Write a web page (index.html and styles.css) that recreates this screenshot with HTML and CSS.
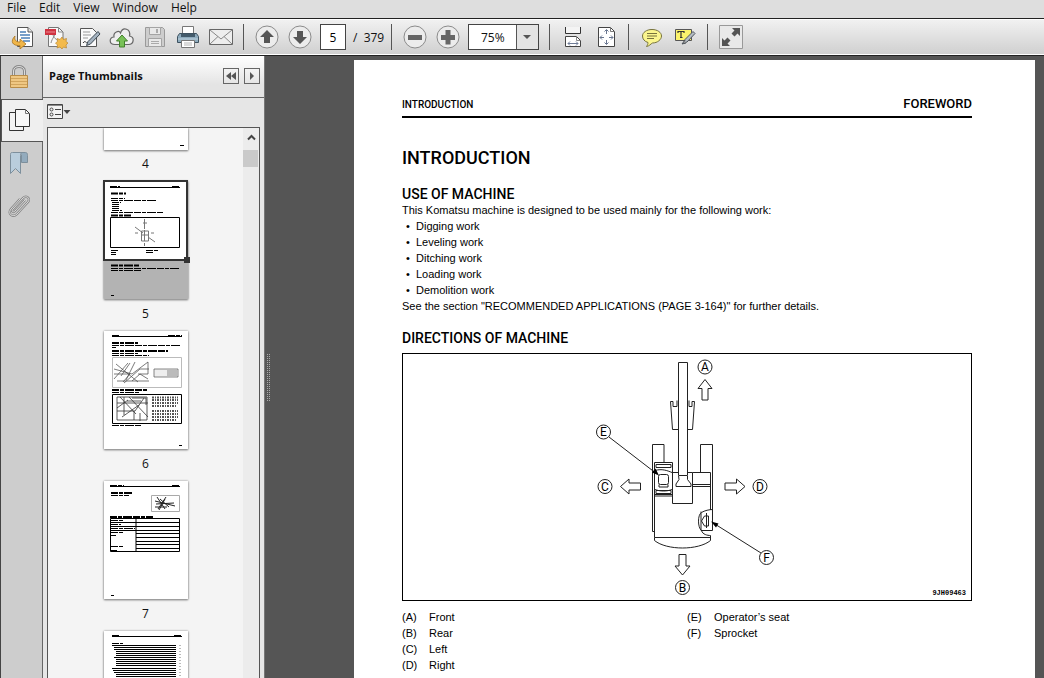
FILE: index.html
```html
<!DOCTYPE html>
<html lang="en">
<head>
    <meta charset="UTF-8">
    <meta name="viewport" content="width=device-width, initial-scale=1.0">
    <title>Shop Manual</title>
    <link rel="stylesheet" href="styles.css">
</head>
<body>
    <nav class="menubar">
        <a href="#">File</a>
        <a href="#">Edit</a>
        <a href="#">View</a>
        <a href="#">Window</a>
        <a href="#">Help</a>
    </nav>

    <div class="toolbar">
        <button class="tool" aria-label="Open">
            <svg width="24" height="24" viewBox="0 0 24 24">
                <path d="M6.500 2.500h10.500l4.500 4.500v14.500h-15z" fill="#fff" stroke="#555"/>
                <path d="M17 2.500v4.500h4.500" fill="#e4e4e4" stroke="#555"/>
                <path d="M9 7h6M9 10h10M10 13h9M12 16h7" stroke="#4b80b8" stroke-width="1.300"/>
                <path d="M4 11c-5 5-3 10 5 9.500V24l6-5-6-5v3c-4 0-6-2-5-6z" fill="#f0b64a" stroke="#a87420" stroke-width=".8"/>
            </svg>
        </button>
        <button class="tool" aria-label="Create PDF">
            <svg width="24" height="24" viewBox="0 0 24 24">
                <path d="M4.500 2.500h10l4.500 4.500v14.500H4.500z" fill="#f8f8f8" stroke="#777"/>
                <path d="M14.500 2.500V7H19M7 18c1-5 5-8 3-9s-1 6 7 7" fill="none" stroke="#888"/>
                <rect x="1" y="4" width="11" height="6" fill="#cf3341"/>
                <path d="M2 7h9" stroke="#ec8a92" stroke-width="1"/>
                <path d="M18 12l1.500 2.500 3-1-.5 3 2 1.500-2 2 .5 3-3-1L18 24l-2-2-3 1 .5-3-2-2 2-1.500-.5-3 3 1z" fill="#f3ba4c" stroke="#b98630" stroke-width=".7"/>
            </svg>
        </button>
        <button class="tool" aria-label="Sign">
            <svg width="24" height="24" viewBox="0 0 24 24">
                <path d="M3.500 3.500h12l4 4v14h-16z" fill="#fafafa" stroke="#555"/>
                <path d="M6 7h7M6 10h8M6 13h5" stroke="#999"/>
                <path d="M6 18c3-4 3 2 5-1" fill="none" stroke="#333"/>
                <path d="M21 6.500l2 2.500-9.500 10-4 1.500 1.500-4z" fill="#a5b3c0" stroke="#3e4a54"/>
            </svg>
        </button>
        <button class="tool" aria-label="Upload">
            <svg width="26" height="24" viewBox="0 0 26 24">
                <path d="M6 19.500C-.5 19.500 0 12 5 12 4 7 10 5 11.500 8 14 1 22 4 20.500 11c5.500 1 4.500 8.500-1 8.500z" fill="#eee" stroke="#666" stroke-width="1.200"/>
                <path d="M13 10l5.500 6h-3v6h-5v-6h-3z" fill="#78c157" stroke="#42812d"/>
            </svg>
        </button>
        <button class="tool" aria-label="Save" disabled>
            <svg width="24" height="24" viewBox="0 0 24 24">
                <path d="M2.500 2.500h17l2 2v17h-19z" fill="#cdcdcd" stroke="#9a9a9a"/>
                <path d="M6.500 2.500h11v7h-11zM5.500 13.500h13v8h-13z" fill="#e9e9e9" stroke="#a4a4a4"/>
                <path d="M13 4h2v4h-2zM8 16h8v1H8zM8 18h8v1H8z" fill="#aaa"/>
            </svg>
        </button>
        <button class="tool" aria-label="Print">
            <svg width="24" height="24" viewBox="0 0 24 24">
                <path d="M6.500 1.500h11v9h-11z" fill="#fff" stroke="#777"/>
                <path d="M3.500 8.500h17l2 3v6h-21v-6z" fill="#8eabbd" stroke="#3e5260"/>
                <path d="M5 9h14v3H5z" fill="#435b6b"/>
                <path d="M2 14h20" stroke="#c1d3df"/>
                <path d="M5.500 15.500h13v7h-13z" fill="#fff" stroke="#777"/>
                <path d="M8 18h8M8 20h8" stroke="#b5b5b5"/>
            </svg>
        </button>
        <button class="tool" aria-label="Email">
            <svg width="24" height="24" viewBox="0 0 24 24">
                <path d="M.5 4.500h23v15H.5z" fill="#eee" stroke="#666"/>
                <path d="M1 5l11 9L23 5M1 19l8-7.500M23 19l-8-7.500" fill="none" stroke="#888"/>
            </svg>
        </button>
        <span class="separator"></span>
        <button class="tool" aria-label="Previous page">
            <svg width="24" height="24" viewBox="0 0 24 24">
                <circle cx="12" cy="12" r="11" fill="#ececec" stroke="#8b8b8b"/>
                <path d="M12 5l7 7h-4v6H9v-6H5z" fill="#555"/>
            </svg>
        </button>
        <button class="tool" aria-label="Next page">
            <svg width="24" height="24" viewBox="0 0 24 24">
                <circle cx="12" cy="12" r="11" fill="#ececec" stroke="#8b8b8b"/>
                <path d="M12 19l7-7h-4V6H9v6H5z" fill="#555"/>
            </svg>
        </button>
        <input class="page-number" type="text" value="5" aria-label="Page number">
        <span class="page-total">/&nbsp; 379</span>
        <span class="separator"></span>
        <button class="tool" aria-label="Zoom out">
            <svg width="24" height="24" viewBox="0 0 24 24">
                <circle cx="12" cy="12" r="11" fill="#ececec" stroke="#8b8b8b"/>
                <path d="M5 10h14v5H5z" fill="#666"/>
            </svg>
        </button>
        <button class="tool" aria-label="Zoom in">
            <svg width="24" height="24" viewBox="0 0 24 24">
                <circle cx="12" cy="12" r="11" fill="#ececec" stroke="#8b8b8b"/>
                <path d="M5 10h4.500V5h5v5H19v5h-4.500v4.500h-5V15H5z" fill="#666"/>
            </svg>
        </button>
        <div class="zoom">
            <select aria-label="Zoom level">
                <option>50%</option>
                <option selected>75%</option>
                <option>100%</option>
            </select>
            <span class="zoom-arrow"></span>
        </div>
        <span class="separator"></span>
        <button class="tool" aria-label="Fit width">
            <svg width="24" height="24" viewBox="0 0 24 24">
                <path d="M4.500 2v6.500h15V2" fill="#f4f4f4" stroke="#333"/>
                <path d="M4.500 21.500v-10h11l4 4v6z" fill="#fff" stroke="#444"/>
                <path d="M15.500 11.500v4h4" fill="none" stroke="#888"/>
                <path d="M7 18.500h10M9 16.500l-2 2 2 2M15 16.500l2 2-2 2" fill="none" stroke="#6f7c96"/>
            </svg>
        </button>
        <button class="tool" aria-label="Fit page">
            <svg width="24" height="24" viewBox="0 0 24 24">
                <path d="M4.500 2.500h12l4 4v15h-16z" fill="#fff" stroke="#444"/>
                <path d="M16.500 2.500v4h4" fill="none" stroke="#777"/>
                <path d="M12.500 5v4M12.500 19v-4M6 12.500h4M19 12.500h-4M10.500 6.500l2-2 2 2M10.500 17.500l2 2 2-2M8 10.500l-2 2 2 2M17 10.500l2 2-2 2" fill="none" stroke="#68758f"/>
            </svg>
        </button>
        <span class="separator"></span>
        <button class="tool" aria-label="Comment">
            <svg width="24" height="24" viewBox="0 0 24 24">
                <path d="M12 4.500c5.500 0 9.500 3 9.500 6.500s-4 7-9 7c-2 1-3 3-6 3.500 1-1.500 1.500-2.500 1.500-4-3.500-1-5.500-3.500-5.500-6.500 0-3.500 4-6.500 9.500-6.500z" fill="#fbf68e" stroke="#77733d"/>
                <path d="M7 8.500h10M7 11h10M7 13.500h7" stroke="#77733d"/>
            </svg>
        </button>
        <button class="tool" aria-label="Highlight text">
            <svg width="24" height="24" viewBox="0 0 24 24">
                <path d="M2.500 4.500h16v11h-16z" fill="#fbf36c" stroke="#555"/>
                <path d="M5 8V6.500h6V8M8 6.500V12M7 12.500h2.500" fill="none" stroke="#333" stroke-width="1.200"/>
                <path d="M20 6.500l2 2-8 8.500-3 1 1-3.500z" fill="#b4bcc4" stroke="#4d5359"/>
                <path d="M12 15l-3 4 4-1" fill="#999" stroke="#4d5359"/>
            </svg>
        </button>
        <span class="separator"></span>
        <button class="tool" aria-label="Full screen">
            <svg width="24" height="24" viewBox="0 0 24 24">
                <path d="M.5.5h23v23H.5z" fill="#e9e9e9" stroke="#999"/>
                <path d="M13 3h8v8l-2.500-2.500-3 3-3-3 3-3zM3 13l2.500 2.500 3-3 3 3-3 3L11 21H3z" fill="#555"/>
            </svg>
        </button>
    </div>

    <main class="workspace">
        <div class="rail">
            <button class="rail-tab" aria-label="Security">
                <svg width="20" height="24" viewBox="0 0 20 24">
                    <path d="M4.500 11V6c0-6 11-6 11 0v5" fill="none" stroke="#8a8a8a" stroke-width="3"/>
                    <path d="M4.500 11V6c0-6 11-6 11 0v5" fill="none" stroke="#dcdcdc"/>
                    <path d="M1.500 10.500h17v12h-17z" fill="#efc783" stroke="#b88c48"/>
                    <path d="M2 13.500h16M2 16.500h16M2 19.500h16" stroke="#d1a45d"/>
                </svg>
            </button>
            <button class="rail-tab active" aria-label="Page Thumbnails">
                <svg width="22" height="24" viewBox="0 0 22 24">
                    <path d="M.5 4.500h14v18H.5z" fill="#f4f4f4" stroke="#333"/>
                    <path d="M6.500 1.500h10l4 4v13h-14z" fill="#f8f8f8" stroke="#333"/>
                    <path d="M16.500 1.500v4h4" fill="none" stroke="#777"/>
                </svg>
            </button>
            <button class="rail-tab" aria-label="Bookmarks">
                <svg width="20" height="24" viewBox="0 0 20 24">
                    <path d="M11.500 1.500h5c2 0 2 2 2 3v7h-6v-8" fill="#93abbd" stroke="#7d8f9c"/>
                    <path d="M1.500 22.500v-19c0-2 1-2 2-2h10c-1.500 0-2 1-2 3v18l-5-5z" fill="#b9cddc" stroke="#7d8f9c"/>
                </svg>
            </button>
            <button class="rail-tab" aria-label="Attachments">
                <svg width="22" height="24" viewBox="0 0 22 24">
                    <path d="M17 6L7 17c-2 2-4 0-2-2L15 4c3-3 8 0 5 4L9 20c-4 4-10 0-6-5L12 5" fill="none" stroke="#858585" stroke-width="2.400"/>
                    <path d="M17 6L7 17c-2 2-4 0-2-2L15 4c3-3 8 0 5 4L9 20c-4 4-10 0-6-5L12 5" fill="none" stroke="#dcdcdc"/>
                </svg>
            </button>
        </div>

        <aside class="panel">
            <header class="panel-header">
                <h2>Page Thumbnails</h2>
                <button class="panel-button" aria-label="Collapse">
                    <svg width="14" height="14" viewBox="0 0 14 14"><path d="M7 3v8L2 7zM12 3v8L7 7z" fill="#555"/></svg>
                </button>
                <button class="panel-button" aria-label="Expand">
                    <svg width="14" height="14" viewBox="0 0 14 14"><path d="M5 3v8l4-4z" fill="#555"/></svg>
                </button>
            </header>
            <div class="panel-body">
                <button class="options" aria-label="Options">
                    <svg width="24" height="15" viewBox="0 0 24 15">
                        <path d="M.5.5h15v14H.5z" fill="#f2f2f2" stroke="#444"/>
                        <path d="M1 1.500h14" stroke="#888"/>
                        <circle cx="4.500" cy="5.500" r="1.500" fill="none" stroke="#444"/>
                        <circle cx="4.500" cy="10.500" r="1.500" fill="none" stroke="#444"/>
                        <path d="M8 5.500h6M8 10.500h6" stroke="#444"/>
                        <path d="M16.500 6h7L20 10z" fill="#444"/>
                    </svg>
                </button>
                <div class="thumb-box">
                    <ol class="thumbs">
                        <li>
                            <svg class="thumb partial" viewBox="0 0 84 22">
                                <path class="txt" d="M76 17.500h4"/>
                            </svg>
                            <span>4</span>
                        </li>
                        <li>
                            <svg class="thumb" viewBox="0 0 84 118">
                                <path d="M0 80h84v38H0z" fill="#b3b3b3"/>
                                <path class="txt" d="M6 5.500h10M68 5.500h8M7 17.500h14M7 19.500h46M8 21.500h9M8 23.500h8M8 25.500h8M8 27.500h8M8 29.500h10M7 31.500h52M7 69.500h7M7 71.500h5M7 73.500h5M42 69.500h13M42 71.500h8M7 78.500h69"/>
                                <path class="txt bold" d="M7 12.500h15M7 34.500h20M7 84.500h28"/>
                                <path class="txt" d="M7 87.500h69M7 89.500h31M7 114.500h3"/>
                                <path d="M6 6.500h70M6.500 36.500h69v30h-69z" class="rule"/>
                                <path d="M40.500 38v10M39 42h4M37.500 50h7v10h-7zM31 46l8 6M44 56l7 5M31 52h3M47 52h3M40.500 62v3M40.500 49v11M38 54h6" fill="none" stroke="#777"/>
                                <path d="M0 0h83v79H0z" fill="none" stroke="#333" stroke-width="2"/>
                                <path d="M80 76h6v6h-6z" fill="#333"/>
                            </svg>
                            <span>5</span>
                        </li>
                        <li>
                            <svg class="thumb" viewBox="0 0 84 118">
                                <path class="txt" d="M8 4.500h8M64 4.500h14M8 14.500h69M8 16.500h4M8 22.500h26M8 24.500h37M8 61.500h27M8 94.500h29M75 114.500h3"/>
                                <path class="txt bold" d="M8 12h26M8 20h56M8 59h35"/>
                                <path d="M8 5.500h70" class="rule"/>
                                <path d="M8.500 26.500h69v30h-69z" fill="none" stroke="#bbb"/>
                                <path d="M10 38l18 5 16-12M12 33l22 18M10 48l14-16M20 52l16-14h9M10 43h16l-7 8M26 32l-9 13M31 31l-9 18M34 43h10v-12M13 50h32M28 50l8-7 8 5" fill="none" stroke="#444" stroke-width=".7"/>
                                <path d="M50 38h24v8H50z" fill="#eee" stroke="#555" stroke-width=".7"/>
                                <path d="M63 39h10v6H63z" fill="#bbb"/>
                                <path d="M8.500 63.500h69v29h-69z" class="rule"/>
                                <path d="M13 66v23h30V66zM13 72h31M20 66v18M25 66l19 20M13 80h18l9-13M16 66l16 17M28 67h14v7M18 86l17-12M23 70h14M30 80v9M36 82v8M13 77l11-8" fill="none" stroke="#333" stroke-width=".8"/>
                                <path class="dense" d="M48 66.500h26M48 69h26M48 72h26M48 75h25M48 80h26M48 83h26M48 86h26M48 89h24"/>
                            </svg>
                            <span>6</span>
                        </li>
                        <li>
                            <svg class="thumb" viewBox="0 0 84 118">
                                <path class="txt" d="M6 4.500h14M68 4.500h8M7 14.500h18M7 114.500h3M7 39.500h12M7 43.500h10M7 47.500h24M7 51.500h12M7 54.500h5M7 65.500h12M7 69.500h6"/>
                                <path class="txt bold" d="M7 12h21M6 36h43"/>
                                <path d="M6 5.500h70" class="rule"/>
                                <path d="M47.500 14.500h28v16h-28z" fill="none" stroke="#aaa"/>
                                <path d="M51 20l20 5M53 16l8 12M62 16l-8 12M51 26h12M56 18l9 8M52 23l18-1M55 29l6-11" fill="none" stroke="#222"/>
                                <path d="M6.500 37.500h69v33h-69zM32 37.500v33M7 41.500h68M7 45.500h68M7 49.500h68M32 52.500h43M32 56.500h43M32 60.500h43M32 63.500h43M32 67.500h43" class="rule"/>
                            </svg>
                            <span>7</span>
                        </li>
                        <li>
                            <svg class="thumb" viewBox="0 0 84 118">
                                <path class="txt" d="M8 4.500h8M70 4.500h8M8 12.500h11"/>
                                <path d="M8 5.500h70" class="rule"/>
                                <path class="rule" d="M8 14.500h64M10 16.500h62M10 18.500h62M12 20.500h60M12 22.500h60M12 24.500h60M10 26.500h62M12 28.500h60M12 30.500h60M12 32.500h60M12 34.500h60M8 37.500h64M9 39.500h63M10 41.500h62M12 43.500h60M12 45.500h60"/>
                                <path d="M76 14v33" stroke="#777" stroke-dasharray="1 2"/>
                            </svg>
                        </li>
                    </ol>
                    <div class="scrollbar">
                        <button aria-label="Scroll up">
                            <svg width="9" height="7" viewBox="0 0 9 7"><path d="M1 5.500L4.500 2 8 5.500" fill="none" stroke="#444" stroke-width="2"/></svg>
                        </button>
                        <div class="scroll-handle"></div>
                    </div>
                </div>
            </div>
        </aside>

        <div class="splitter"><span class="grip"></span></div>

        <section class="document">
            <article class="page">
                <header class="page-header">
                    <span class="chapter">INTRODUCTION</span>
                    <span class="book-part">FOREWORD</span>
                </header>
                <h1>INTRODUCTION</h1>
                <h2>USE OF MACHINE</h2>
                <p>This Komatsu machine is designed to be used mainly for the following work:</p>
                <ul>
                    <li>Digging work</li>
                    <li>Leveling work</li>
                    <li>Ditching work</li>
                    <li>Loading work</li>
                    <li>Demolition work</li>
                </ul>
                <p>See the section "RECOMMENDED APPLICATIONS (PAGE 3-164)" for further details.</p>
                <h2>DIRECTIONS OF MACHINE</h2>
                <figure>
                    <!-- machine seen from above, front at the top -->
                    <svg class="diagram" viewBox="403 354 568 246" height="246">
                        <g class="lines">
                            <!-- tracks -->
                            <path d="M664 462.500v-18h-11.500v87h2M700.500 472v-27.500h12v86h-11.500v-19"/>
                            <!-- bucket and boom -->
                            <path d="M678 429.500h-5.500l-2-28h2.500v5h4v-6M688 429.500h4.500l2-28h-2.500v5h-3v-6"/>
                            <path d="M678.500 475v-112.500h9V475"/>
                            <path d="M678.500 475.500h9v4l3.500 4.500v2.500h-15V484l3-4.500z"/>
                            <path d="M678 472.500h-5.500v31h20v-31h-5"/>
                            <!-- cab -->
                            <path d="M654.500 537.500v-75h18v32h-18M656 464.500h15v3h-15zM655 470.500c7-2 12 0 17 2M655 489.500c5 2 12 2 17 0M656 490.500h15v3h-15zM655 496h17"/>
                            <rect x="658.500" y="474.500" width="10" height="10" rx="2"/>
                            <path d="M659 484.500v2.500h9v-2.500"/>
                            <!-- body -->
                            <path d="M692.500 472.500h18V510M693 484.500h17M693 486.500h17M654.500 537.500h56M654.500 537.500v3c12 10 44 10 56 0v-5c-3 0-8-1-9-5-4-3-4-16 0-18 3-2 8-3 11.500-3"/>
                            <path d="M706.500 513v15M704.500 516l-3 5 3 5h4v-10z"/>
                            <!-- arrows -->
                            <path d="M705 379.500l7 9h-4v11.500h-6v-11.500h-4z"/>
                            <path d="M682.500 575l-7.500-9h4v-11.500h7V566h4z"/>
                            <path d="M620.500 486.500l8.500-7.500v4h11.500v7H629v4z"/>
                            <path d="M745 486.500l-8.500-7.500v4H725v7h11.500v4z"/>
                            <path d="M609 437l48 37M761 553l-47-29.500"/>
                            <circle cx="705" cy="367" r="7"/>
                            <circle cx="682.500" cy="587.500" r="7"/>
                            <circle cx="605" cy="486.500" r="7"/>
                            <circle cx="760" cy="486.500" r="7"/>
                            <circle cx="603.500" cy="432" r="7"/>
                            <circle cx="766.500" cy="557.500" r="7"/>
                        </g>
                        <path d="M659 475.500l-7-3 3.500-4zM711 521.500l7.500 2-2.500 4z"/>
                        <g class="letters">
                            <text x="705" y="371">A</text>
                            <text x="682.500" y="592">B</text>
                            <text x="605" y="491">C</text>
                            <text x="760" y="491">D</text>
                            <text x="603.500" y="436">E</text>
                            <text x="766.500" y="562">F</text>
                        </g>
                        <text class="figure-code" x="966" y="595">9JH09463</text>
                    </svg>
                </figure>
                <div class="legend">
                    <dl>
                        <dt>(A)</dt><dd>Front</dd>
                        <dt>(B)</dt><dd>Rear</dd>
                        <dt>(C)</dt><dd>Left</dd>
                        <dt>(D)</dt><dd>Right</dd>
                    </dl>
                    <dl>
                        <dt>(E)</dt><dd>Operator’s seat</dd>
                        <dt>(F)</dt><dd>Sprocket</dd>
                    </dl>
                </div>
            </article>
        </section>
    </main>
</body>
</html>
```
FILE: styles.css
```css
* {
    box-sizing: border-box;
}
body {
    margin: 0;
    height: 100vh;
    display: flex;
    flex-direction: column;
    overflow: hidden;
    font-family: "Open Sans", "Noto Sans", sans-serif;
    font-size: 12px;
    color: #111;
    background-color: #dedede;
}
button {
    padding: 0;
    border: none;
    background: none;
    display: flex;
    align-items: center;
    justify-content: center;
}
svg {
    display: block;
}
h1, h2, p, ul, ol, dl, dd, figure {
    margin: 0;
    padding: 0;
}

/* menu and toolbar */
.menubar {
    display: flex;
    gap: 13px;
    height: 18px;
    padding: 0 7px;
    line-height: 16px;
}
.menubar a {
    color: #111;
    text-decoration: none;
}
.toolbar {
    display: flex;
    align-items: center;
    flex-shrink: 0;
    height: 38px;
    padding-left: 6px;
    border-top: 1px solid #222;
    border-bottom: 1px solid #222;
    background: linear-gradient(#f2f2f2, #cfcfcf);
    box-shadow: inset 0 1px #fff, inset 0 -1px #fff;
}
.tool {
    width: 33px;
    height: 30px;
}
.separator {
    width: 1px;
    height: 26px;
    margin: 0 6px;
    background-color: #555;
}
.page-number {
    width: 26px;
    height: 26px;
    margin-left: 4px;
    padding: 0;
    border: 1px solid #444;
    text-align: center;
    font: inherit;
}
.page-total {
    width: 39px;
    padding-left: 7px;
    white-space: nowrap;
}
.zoom {
    position: relative;
    margin: 0 4px;
}
.zoom select {
    display: block;
    width: 71px;
    height: 26px;
    padding: 0 0 0 12px;
    border: 1px solid #444;
    border-radius: 0;
    background-color: #fff;
    color: #111;
    font: inherit;
    appearance: none;
}
.zoom-arrow {
    position: absolute;
    top: 1px;
    right: 1px;
    width: 22px;
    height: 24px;
    border-left: 1px solid #555;
    background-color: #e4e4e4;
    pointer-events: none;
}
.zoom-arrow::after {
    content: "";
    position: absolute;
    top: 10px;
    left: 6px;
    border: 4px solid transparent;
    border-top-color: #555;
}

/* navigation pane */
.workspace {
    display: flex;
    flex: 1;
    min-height: 0;
}
.rail {
    width: 43px;
    border-left: 1px solid #444;
    background: linear-gradient(to right, #cdcdcd 41px, #666 41px);
}
.rail-tab {
    width: 41px;
    height: 43px;
    padding: 0 5px 2px 0;
}
.rail-tab.active {
    width: 42px;
    border: 1px solid #555;
    border-right: none;
    background-color: #efefef;
}
.panel {
    display: flex;
    flex-direction: column;
    width: 221px;
    background-color: #e6e6e6;
}
.panel-header {
    display: flex;
    align-items: center;
    gap: 5px;
    height: 42px;
    padding: 0 4px 2px 6px;
    border-bottom: 1px solid #666;
    background: linear-gradient(#fff, #e4e4e4 70%);
}
.panel-header h2 {
    flex: 1;
    font-size: 11px;
    font-weight: bold;
}
.panel-button {
    width: 16px;
    height: 16px;
    border: 1px solid #666;
}
.panel-body {
    display: flex;
    flex: 1;
    flex-direction: column;
    min-height: 0;
    padding: 6px 4px 0;
}
.options {
    width: 24px;
    height: 15px;
    margin-bottom: 8px;
}
.thumb-box {
    display: flex;
    flex: 1;
    min-height: 0;
    border: 1px solid #555;
    border-bottom: none;
    background-color: #f4f4f4;
}
.thumbs {
    flex: 1;
    padding-left: 1px;
    padding-right: 1px;
    overflow: hidden;
    list-style: none;
}
.thumbs li {
    display: flex;
    flex-direction: column;
    align-items: center;
}
.thumbs span {
    height: 30px;
    line-height: 28px;
}
.thumb {
    width: 84px;
    height: 118px;
    margin: 1px 0;
    overflow: visible;
    background-color: #fff;
    box-shadow: 0 0 2px #999, 0 1px 2px #777;
}
.thumb.partial {
    height: 22px;
    margin: 0;
}
.txt {
    fill: none;
    stroke: #000;
    stroke-dasharray: 7 1 4 1 9 1;
}
.txt.bold {
    stroke-width: 2;
}
.rule {
    fill: none;
    stroke: #000;
}
.dense {
    stroke: #555;
    stroke-width: 2;
    stroke-dasharray: 2 1 1 1;
}
.scrollbar {
    width: 16px;
    background-color: #ececec;
}
.scrollbar button {
    width: 16px;
    height: 22px;
    padding-bottom: 3px;
}
.scroll-handle {
    width: 15px;
    height: 17px;
    background-color: #cacaca;
}
.splitter {
    display: flex;
    align-items: center;
    width: 6px;
    padding: 22px 0 0 1px;
    border-left: 1px solid #777;
    background-color: #555;
}
.grip {
    width: 4px;
    height: 48px;
    background: conic-gradient(#aaa 25%, #555 0) 0 0 / 2px 2px;
}

/* document */
.document {
    display: flex;
    flex: 1;
    padding: 4px 9px 0 84px;
    overflow: hidden;
    background-color: #555;
}
.page {
    flex: 1;
    min-height: 800px;
    padding: 36px 63px 36px 48px;
    background-color: #fff;
    color: #000;
    font-family: "Liberation Sans", Arial, sans-serif;
    font-size: 11px;
    line-height: 16px;
}
.page-header {
    display: flex;
    justify-content: space-between;
    height: 22px;
    border-bottom: 2px solid #000;
}
.page-header, .page h1, .page h2 {
    font-family: Roboto, "Liberation Sans", sans-serif;
    font-weight: 500;
}
.chapter {
    font-size: 10px;
    line-height: 18px;
}
.book-part {
    font-size: 13px;
}
.page h1 {
    margin-top: 28px;
    font-size: 18px;
    line-height: 24px;
}
.page h2 {
    margin-top: 16px;
    font-size: 14px;
    line-height: 16px;
}
.page ul {
    list-style: none;
}
.page ul li::before {
    content: "•";
    display: inline-block;
    width: 10px;
    padding-left: 4px;
}
figure {
    margin-top: 7px;
    border: 1px solid #000;
}
.diagram {
    width: 100%;
}
.lines {
    fill: none;
    stroke: #222;
}
.letters {
    font-family: Roboto, "Liberation Sans", sans-serif;
    font-size: 12px;
    text-anchor: middle;
}
.figure-code {
    font-family: "Liberation Mono", monospace;
    font-size: 7px;
    font-weight: bold;
    text-anchor: end;
}
.legend {
    display: grid;
    grid-template-columns: 1fr 1fr;
    margin-top: 8px;
}
.legend dl {
    display: grid;
    grid-template-columns: 27px 1fr;
    align-content: start;
}
```
